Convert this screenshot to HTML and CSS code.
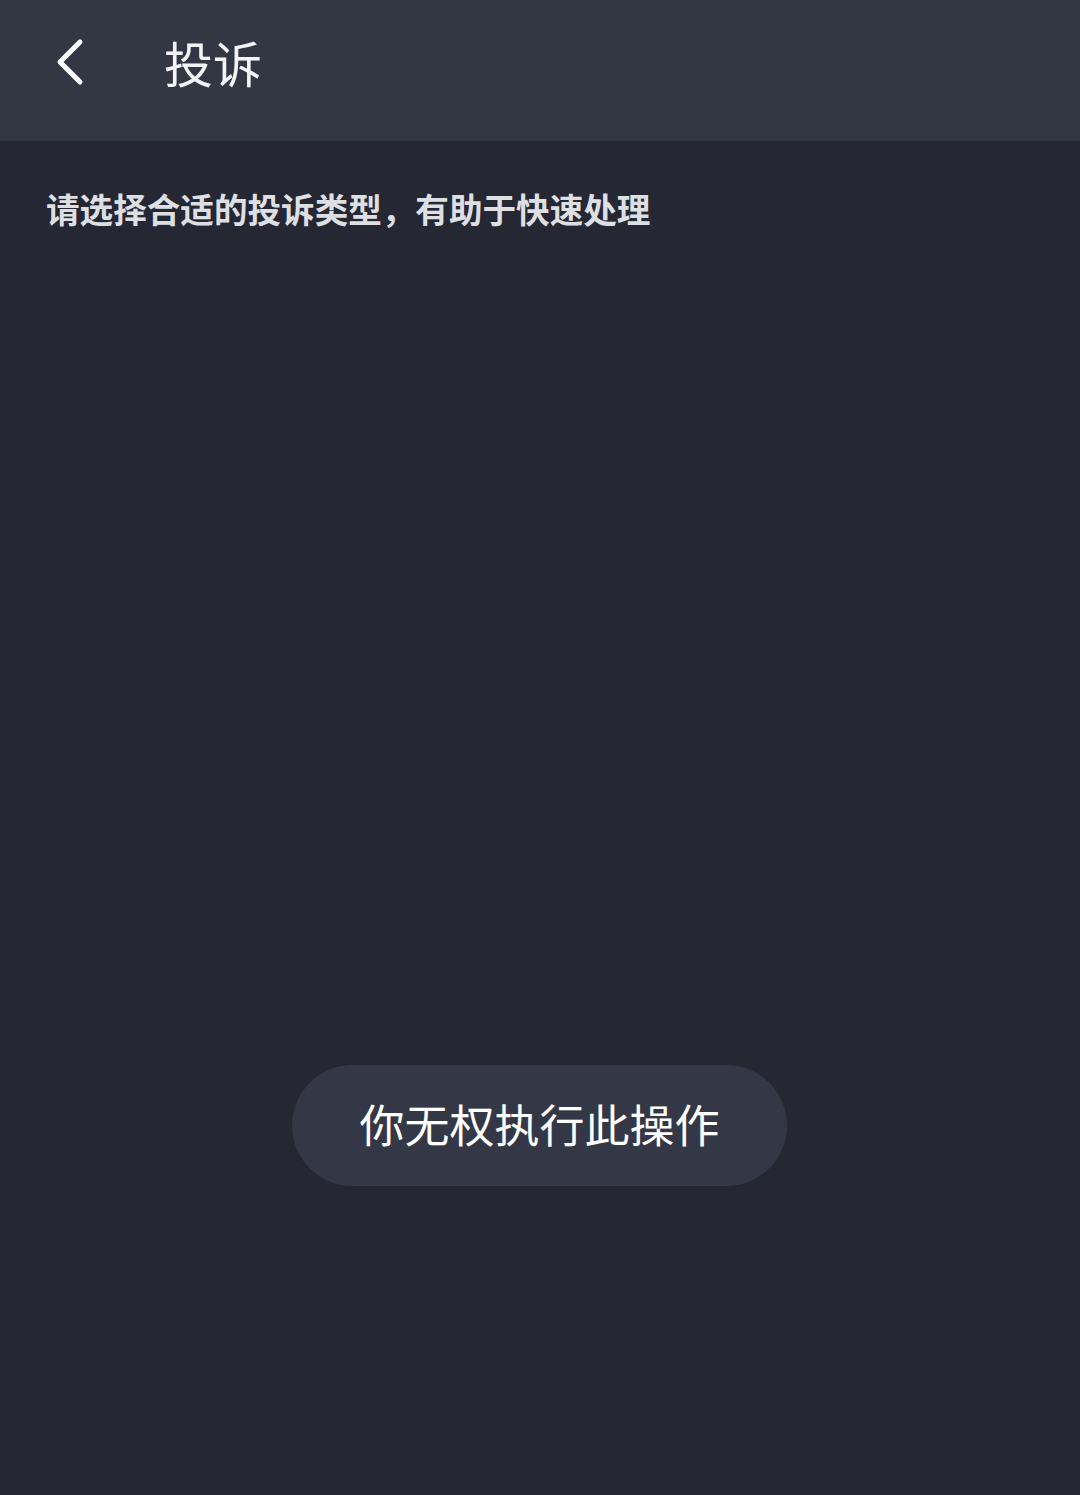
FILE: index.html
```html
<!DOCTYPE html>
<html lang="zh-CN">
<head>
<meta charset="utf-8">
<title>投诉</title>
<link rel="stylesheet" href="styles.css">
</head>
<body>
<div class="page">
  <header class="topbar">
    <span class="back">
      <svg width="34" height="48" viewBox="0 0 34 48"><polyline points="28,4 8,24 28,44" fill="none" stroke="#ffffff" stroke-width="5" stroke-linecap="round" stroke-linejoin="round"/></svg>
    </span>
    <h1 class="title">投诉</h1>
  </header>
  <main class="content">
    <p class="hint">请选择合适的投诉类型，有助于快速处理</p>
  </main>
  <div class="toast"><span class="toast-text">你无权执行此操作</span></div>
</div>
</body>
</html>
```
FILE: styles.css
```css
* { box-sizing: border-box; }
html, body {
  margin: 0;
  padding: 0;
  background: #252732;
  font-family: "Noto Sans CJK SC", "Noto Sans", sans-serif;
}
.page {
  position: relative;
  width: 1080px;
  height: 1495px;
  background: #252732;
  overflow: hidden;
}
.topbar {
  height: 141px;
  background: #333744;
  display: flex;
  align-items: center;
  padding-left: 52px;
}
.back {
  display: flex;
  width: 34px;
  height: 48px;
  margin-top: -17px;
}
.title {
  margin: -18px 0 0 78px;
  font-size: 49px;
  font-weight: 400;
  color: #f4f4f6;
  line-height: 1;
}
.content {
  padding: 48px 46px 0;
}
.hint {
  margin: 0;
  font-size: 33.6px;
  line-height: 40px;
  font-weight: 700;
  color: #dedfe3;
}
.toast {
  position: absolute;
  left: 292px;
  top: 1065px;
  width: 495px;
  height: 121px;
  border-radius: 61px;
  background: #343846;
  color: #ffffff;
  font-size: 45px;
  display: flex;
  align-items: center;
  justify-content: center;
  line-height: 1;
}
.toast-text {
  margin-top: -5px;
}
```
